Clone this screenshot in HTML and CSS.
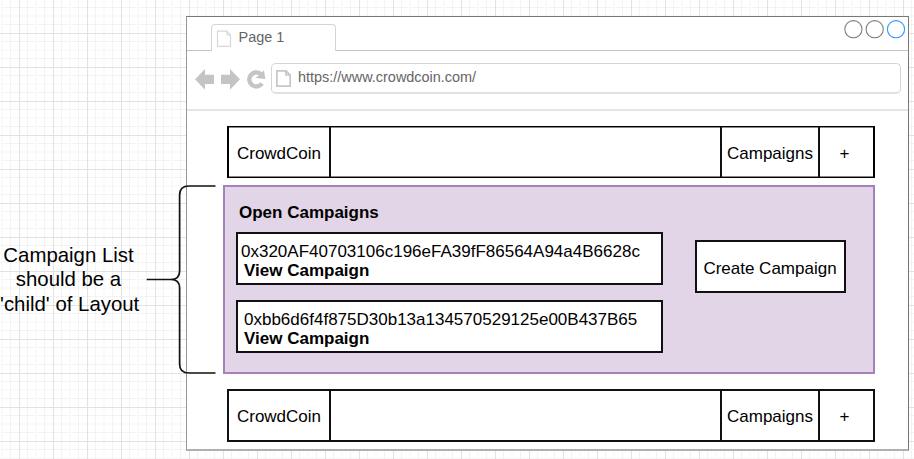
FILE: index.html
```html
<!DOCTYPE html>
<html lang="en">
<head>
<meta charset="utf-8">
<title>CrowdCoin layout</title>
<link rel="stylesheet" href="styles.css">
</head>
<body>
<div class="canvas">
  <aside class="note">Campaign List<br>should be a<br>'child' of Layout</aside>
  <main class="window">
    <header class="tabstrip">
      <div class="tab">
        <svg class="tab-page" width="16" height="18" viewBox="0 0 16 18"><path d="M1.5 1.2H11L14.5 5V16.3H1.5Z M11 1.2V5H14.5"/></svg>
        <span>Page 1</span>
      </div>
      <svg class="controls" width="64" height="20" viewBox="0 0 64 20"><circle cx="10.4" cy="10.2" r="8.6"/><circle cx="31.7" cy="10.2" r="8.6"/><circle class="active" cx="53" cy="10.2" r="8.6"/></svg>
    </header>
    <div class="toolbar">
      <svg class="history" width="72" height="22" viewBox="0 0 72 22"><path d="M0 10.3L10 0V5.7H19V15H10V20.8Z M45 10.3L35 0V5.7H26V15H35V20.8Z"/><path class="reload" d="M67 14.4A7 7 0 1 1 65.8 5.1"/><path d="M68.9 1.2L70.4 9.9L60.8 8.9Z"/></svg>
      <div class="address">
        <svg class="page" width="17" height="19" viewBox="0 0 17 19"><path d="M1.9 1.9H11L15.2 6V17.2H1.9Z M11 1.9V6H15.2"/></svg>
        <span>https://www.crowdcoin.com/</span>
      </div>
    </div>
    <nav class="nav">
      <div class="brand">CrowdCoin</div>
      <div class="link">Campaigns</div>
      <div class="plus">+</div>
    </nav>
    <section class="content">
      <div class="list">
        <h1>Open Campaigns</h1>
        <article class="card">0x320AF40703106c196eFA39fF86564A94a4B6628c<b>View Campaign</b></article>
        <article class="card second"><span>0xbb6d6f4f875D30b13a134570529125e00B437B65</span><b>View Campaign</b></article>
      </div>
      <div class="create">Create Campaign</div>
    </section>
    <nav class="nav footer">
      <div class="brand">CrowdCoin</div>
      <div class="link">Campaigns</div>
      <div class="plus">+</div>
    </nav>
  </main>
  <svg class="brace" width="72" height="192" viewBox="0 0 72 192"><path d="M69.5 2H43Q33.6 2 33.6 11V87Q33.6 95.5 25 95.5H0.7H25Q33.6 95.5 33.6 104V180Q33.6 189 43 189H69.5"/></svg>
</div>
</body>
</html>
```
FILE: styles.css
```css
* { box-sizing: border-box; }
body {
  margin: 0;
  font-family: "Liberation Sans", Arial, sans-serif;
  color: #000;
}
svg { display: block; flex: none; fill: none; }
.canvas {
  position: relative;
  display: flex;
  width: 914px;
  height: 459px;
  overflow: hidden;
  background-color: #fff;
  background-image:
    linear-gradient(90deg, #e2e2e2 1px, transparent 1px),
    linear-gradient(#e2e2e2 1px, transparent 1px),
    linear-gradient(90deg, #f3f3f3 1px, transparent 1px 8px, #f3f3f3 8px 9px, transparent 9px 16px, #fafafa 16px 18px, transparent 18px 25px, #f3f3f3 25px 26px, transparent 26px),
    linear-gradient(#f3f3f3 1px, transparent 1px 8px, #f3f3f3 8px 9px, transparent 9px 16px, #fafafa 16px 18px, transparent 18px 25px, #f3f3f3 25px 26px, transparent 26px);
  background-size: 34px 34px;
  background-position: 19px 33px;
}
.note {
  flex: none;
  width: 186px;
  padding: 243px 49px 0 0;
  font-size: 20.4px;
  line-height: 24.4px;
  text-align: center;
  white-space: nowrap;
}
.window {
  width: 723px;
  height: 435px;
  margin-top: 16px;
  background: #fff;
  border: 1px solid #777;
  border-left-color: #999;
  border-bottom: 2px solid #b0b0b0;
}
.tabstrip {
  display: flex;
  justify-content: space-between;
  height: 34px;
  padding-left: 24px;
  border-bottom: 1px solid #c4c4c4;
}
.tab {
  display: flex;
  width: 125px;
  height: 27px;
  margin-top: 7px;
  padding: 4px 0 0 4px;
  background: #fff;
  border: 1px solid #d5d5d5;
  border-bottom: 0;
  border-radius: 4px 4px 0 0;
  color: #666;
  font-size: 14.45px;
  line-height: 17px;
}
.tab span { margin-left: 6.5px; }
.tab-page { margin-top: 1px; stroke: #d8d8d8; stroke-width: 1.2; }
.controls { margin: 2px 1px 0 0; stroke: #808080; stroke-width: 1.1; }
.controls .active { stroke: #3399ff; }
.toolbar {
  display: flex;
  height: 60px;
  padding: 12px 7px 0 8px;
  border-bottom: 2px solid #e5e5e5;
  margin-bottom: 14px;
}
.history { margin: 6px 4px 0 0; fill: #c4c4c4; }
.history .reload { fill: none; stroke: #c4c4c4; stroke-width: 4.4; }
.address {
  display: flex;
  flex: 1;
  height: 31px;
  padding: 5px 0 0 3px;
  border: 1px solid #d5d5d5;
  border-bottom: 2px solid #e0e0e0;
  border-radius: 5px;
  color: #666;
  font-size: 14.45px;
  line-height: 17px;
}
.page { stroke: #c6c6c6; stroke-width: 1.7; }
.address span { margin-left: 6px; }
.nav {
  display: flex;
  width: 648px;
  height: 54px;
  margin-left: 40px;
  border: 2px solid #111;
  font-size: 17px;
  line-height: 53px;
  text-align: center;
}
.nav:not(.footer) {
  border-width: 1px 2px;
  box-shadow: inset 0 1px #888, inset 0 -1px #888;
  height: 52px;
  margin-top: 15px;
  border-color: #000;
}
.brand { width: 102px; border-right: 2px solid #111; }
.link { width: 100px; margin-left: auto; border: solid #111; border-width: 0 2px; }
.plus { width: 53px; padding-right: 4px; }
.content {
  display: flex;
  width: 652px;
  height: 189px;
  margin: 7px 0 15px 36px;
  padding: 0 0 0 11px;
  background: #e1d5e7;
  border: 2px solid #a680b8;
}
.list { width: 427px; }
.list h1 {
  margin: 16px 0 9px 3px;
  font-size: 17px;
  line-height: 20px;
}
.card {
  width: 427px;
  height: 53px;
  padding: 8px 0 0 3px;
  background: #fff;
  border: 2px solid #111;
  font-size: 17px;
  line-height: 19px;
  white-space: nowrap;
}
.card b { display: block; padding-left: 3px; }
.second { margin-top: 15px; }
.second span { padding-left: 3px; }
.create {
  width: 151px;
  height: 53px;
  margin: 53px 0 0 32px;
  padding-right: 1px;
  background: #fff;
  border: 2px solid #111;
  font-size: 17px;
  line-height: 53px;
  text-align: center;
}
.footer { height: 53px; line-height: 51px; }
.brace {
  position: absolute;
  left: 146px;
  top: 184px;
  stroke: #111;
  stroke-width: 1.7;
}
```
